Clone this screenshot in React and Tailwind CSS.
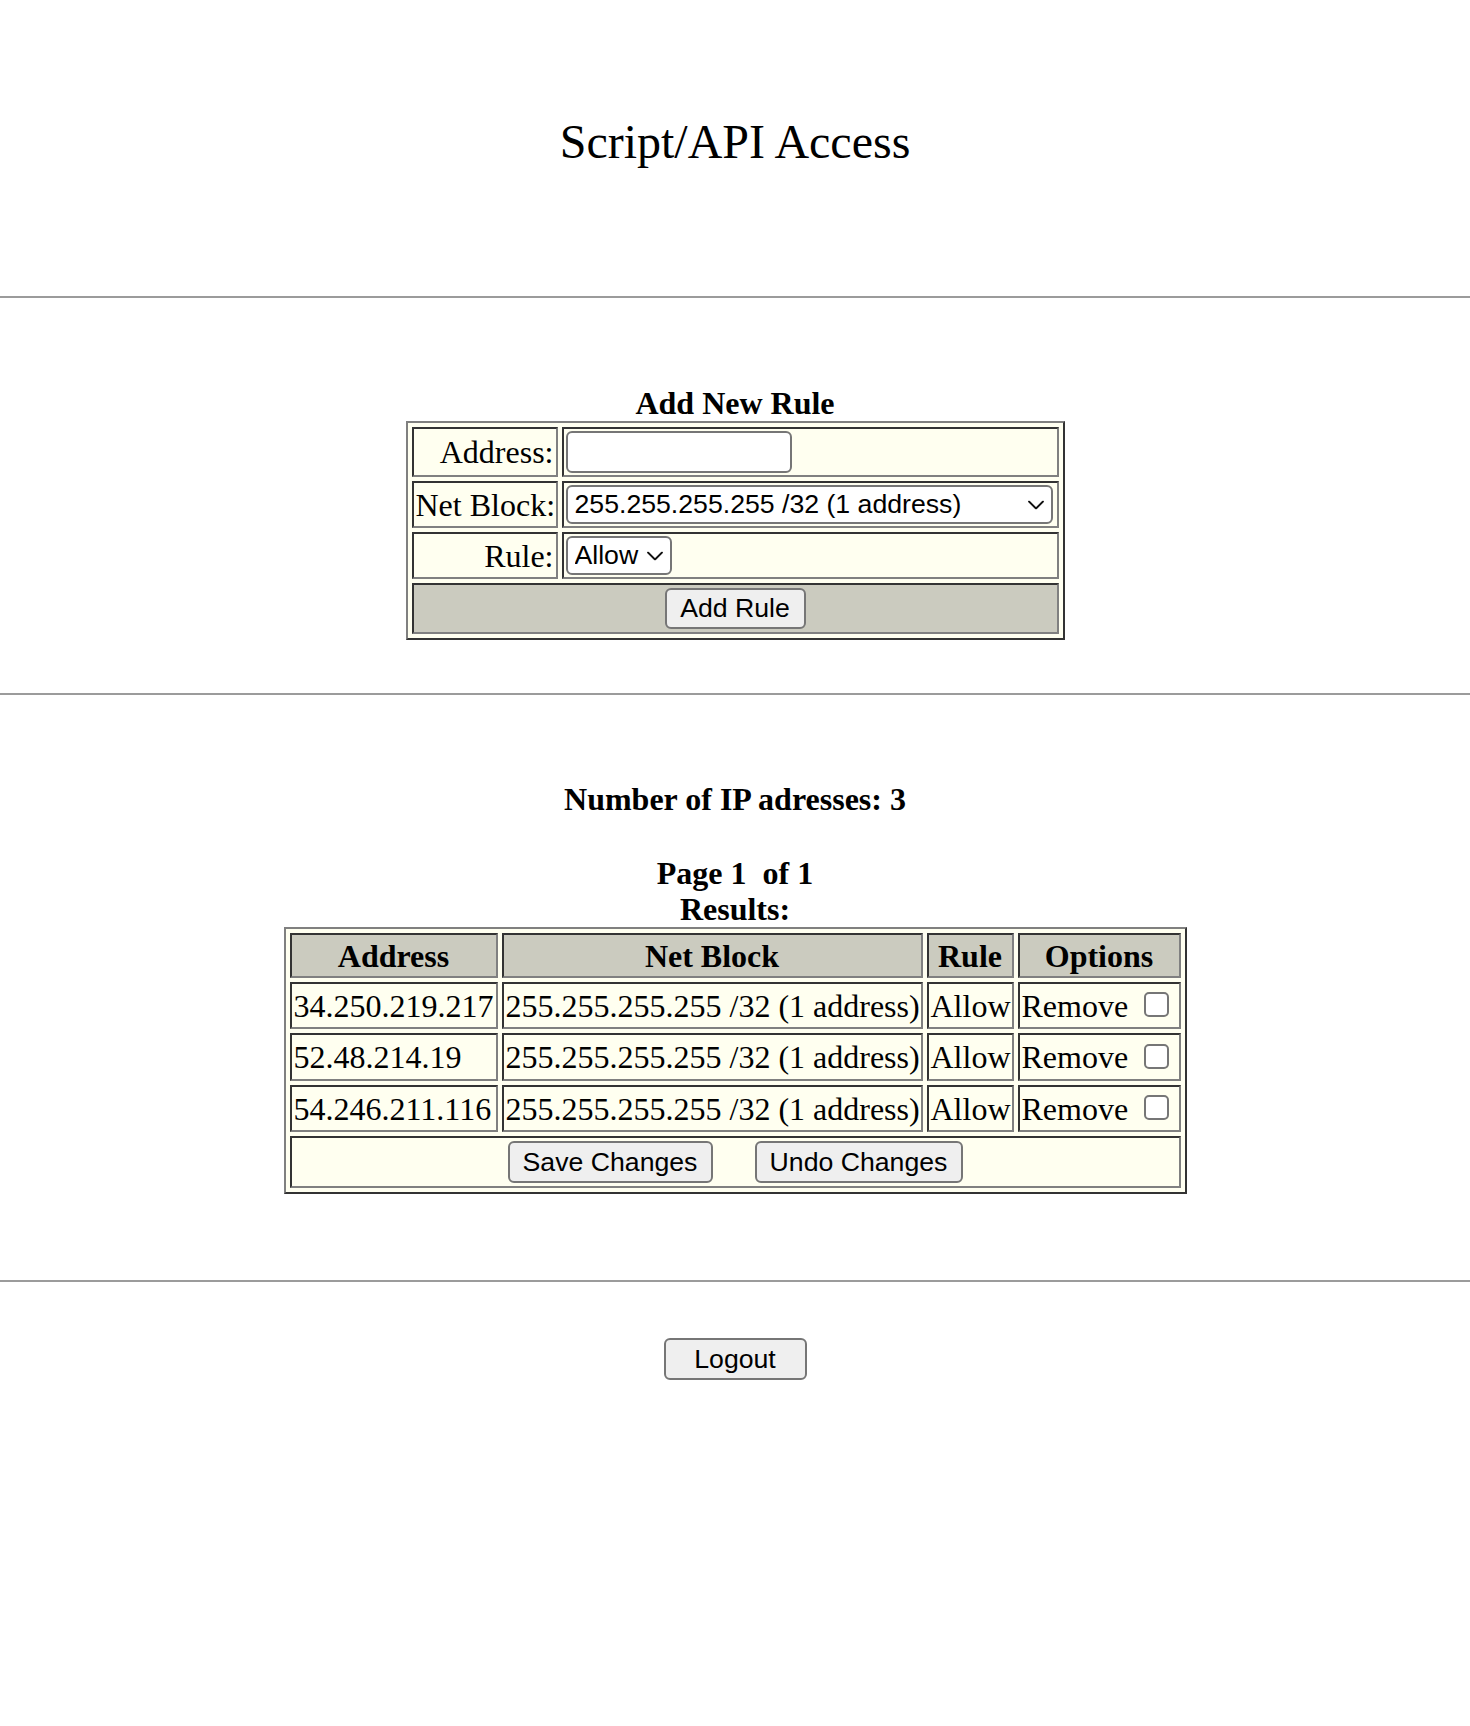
import { useState } from "react";

const cellBorder = "border-2 border-t-[#333333] border-l-[#333333] border-r-[#808080] border-b-[#808080]";
const outerBorder = "border-2 border-t-[#808080] border-l-[#808080] border-r-[#333333] border-b-[#333333]";
const btn =
    "bg-[#efefef] border-2 border-[#767676] rounded-[6px] font-['Liberation_Sans',Arial,sans-serif] text-[26.67px] leading-none text-black";

function Chevron({ className }) {
    return (
        <svg className={className} width="16" height="9" viewBox="0 0 16 9" fill="none">
            <path d="M1 1 L8 8 L15 1" stroke="#111" strokeWidth="1.8" strokeLinecap="round" strokeLinejoin="round" />
        </svg>
    );
}

function Select({ width, value, onChange, options }) {
    return (
        <div className="relative flex w-fit">
            <select
                value={value}
                onChange={(e) => onChange(e.target.value)}
                style={{ width }}
                className="block appearance-none h-[39px] bg-white border-2 border-[#767676] rounded-[6px] pl-[7px] pr-[30px] font-['Liberation_Sans',Arial,sans-serif] text-[26.67px] leading-none text-black"
            >
                {options.map((o) => (
                    <option key={o}>{o}</option>
                ))}
            </select>
            <Chevron className="absolute right-[9px] top-1/2 -translate-y-1/2 pointer-events-none" />
        </div>
    );
}

export default function App() {
    const [address, setAddress] = useState("");
    const [block, setBlock] = useState("255.255.255.255 /32 (1 address)");
    const [rule, setRule] = useState("Allow");
    const [removed, setRemoved] = useState({});

    const rules = [
        { address: "34.250.219.217", block: "255.255.255.255 /32 (1 address)", rule: "Allow" },
        { address: "52.48.214.19", block: "255.255.255.255 /32 (1 address)", rule: "Allow" },
        { address: "54.246.211.116", block: "255.255.255.255 /32 (1 address)", rule: "Allow" },
    ];
    const rowHeights = ["h-[47px]", "h-[48px]", "h-[47px]"];

    return (
        <div className="min-h-[1726px] bg-white text-black font-['Liberation_Serif','Times_New_Roman',serif] text-[32px]">
            {/* title */}
            <div className="pt-[115px] text-center text-[48px] leading-[53px]">Script/API Access</div>

            <div className="mt-[128px] h-[2px] bg-[#9b9b9b]" />

            {/* add rule form */}
            <table className={`mt-[87px] mx-auto w-[659px] table-fixed border-separate border-spacing-[4px] bg-[#fffff0] ${outerBorder}`}>
                <caption className="font-bold leading-[36px] bg-white">Add New Rule</caption>
                <tbody>
                    <tr>
                        <td className={`w-[146px] h-[50px] p-[2px] text-right leading-[36px] ${cellBorder}`}>Address:</td>
                        <td className={`w-[497px] h-[50px] p-[2px] ${cellBorder}`}>
                            <div className="flex items-center">
                                <input
                                    type="text"
                                    value={address}
                                    onChange={(e) => setAddress(e.target.value)}
                                    className="block h-[42px] w-[226px] bg-white border-2 border-[#767676] rounded-[6px] px-[4px] font-['Liberation_Sans',Arial,sans-serif] text-[26.67px]"
                                />
                            </div>
                        </td>
                    </tr>
                    <tr>
                        <td className={`h-[47px] p-[2px] text-right whitespace-nowrap leading-[36px] ${cellBorder}`}>Net Block:</td>
                        <td className={`h-[47px] p-[2px] ${cellBorder}`}>
                            <Select
                                width="487px"
                                value={block}
                                onChange={setBlock}
                                options={["255.255.255.255 /32 (1 address)", "255.255.255.0 /24 (256 addresses)"]}
                            />
                        </td>
                    </tr>
                    <tr>
                        <td className={`h-[47px] p-[2px] text-right leading-[36px] ${cellBorder}`}>Rule:</td>
                        <td className={`h-[47px] p-[2px] ${cellBorder}`}>
                            <Select width="106px" value={rule} onChange={setRule} options={["Allow", "Deny"]} />
                        </td>
                    </tr>
                    <tr>
                        <td colSpan={2} className={`h-[51px] p-[2px] bg-[#cbcbbf] ${cellBorder}`}>
                            <div className="flex justify-center items-center">
                                <button className={`${btn} h-[41px] w-[141px]`}>Add Rule</button>
                            </div>
                        </td>
                    </tr>
                </tbody>
            </table>

            <div className="mt-[53px] h-[2px] bg-[#9b9b9b]" />

            {/* current rules */}
            <div className="mt-[86px] text-center font-bold leading-[36px]">Number of IP adresses: 3</div>

            <table className={`mt-[38px] mx-auto w-[903px] table-fixed border-separate border-spacing-[4px] bg-[#fffff0] ${outerBorder}`}>
                <caption className="font-bold leading-[36px] bg-white">
                    Page 1&nbsp; of 1
                    <br />
                    Results:
                </caption>
                <thead>
                    <tr className="bg-[#cbcbbf]">
                        <th className={`w-[208px] h-[45px] p-[2px] font-bold leading-[36px] ${cellBorder}`}>Address</th>
                        <th className={`w-[421px] h-[45px] p-[2px] font-bold leading-[36px] ${cellBorder}`}>Net Block</th>
                        <th className={`w-[87px] h-[45px] p-[2px] font-bold leading-[36px] ${cellBorder}`}>Rule</th>
                        <th className={`w-[163px] h-[45px] p-[2px] font-bold leading-[36px] ${cellBorder}`}>Options</th>
                    </tr>
                </thead>
                <tbody>
                    {rules.map((r, idx) => (
                        <tr key={idx}>
                            <td className={`${rowHeights[idx]} p-[2px] whitespace-nowrap leading-[36px] ${cellBorder}`}>{r.address}</td>
                            <td className={`${rowHeights[idx]} p-[2px] whitespace-nowrap leading-[36px] ${cellBorder}`}>{r.block}</td>
                            <td className={`${rowHeights[idx]} p-[2px] whitespace-nowrap leading-[36px] ${cellBorder}`}>{r.rule}</td>
                            <td className={`${rowHeights[idx]} p-[2px] whitespace-nowrap leading-[36px] ${cellBorder}`}>
                                <div className="flex items-center">
                                    <span>Remove</span>
                                    <input
                                        type="checkbox"
                                        checked={!!removed[idx]}
                                        onChange={(e) => setRemoved({ ...removed, [idx]: e.target.checked })}
                                        className="appearance-none ml-[16px] mt-[-2px] w-[25px] h-[25px] bg-white border-2 border-[#767676] rounded-[5px] checked:bg-[#1a73e8]"
                                    />
                                </div>
                            </td>
                        </tr>
                    ))}
                    <tr>
                        <td colSpan={4} className={`h-[52px] p-[2px] ${cellBorder}`}>
                            <div className="flex justify-center items-center gap-[42px]">
                                <button className={`${btn} h-[42px] w-[205px]`}>Save Changes</button>
                                <button className={`${btn} h-[42px] w-[208px]`}>Undo Changes</button>
                            </div>
                        </td>
                    </tr>
                </tbody>
            </table>

            <div className="mt-[86px] h-[2px] bg-[#9b9b9b]" />

            <div className="mt-[56px] flex justify-center">
                <button className={`${btn} h-[42px] w-[143px]`}>Logout</button>
            </div>
        </div>
    );
}
